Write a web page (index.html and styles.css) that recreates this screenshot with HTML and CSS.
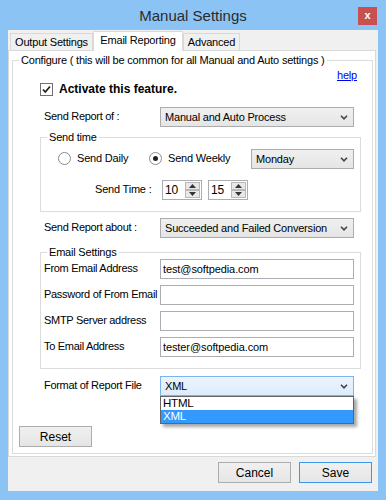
FILE: index.html
```html
<!DOCTYPE html>
<html lang="en">

<head>
    <meta charset="UTF-8">
    <meta name="viewport" content="width=device-width, initial-scale=1.0">
    <title>Manual Settings</title>
    <link rel="stylesheet" href="styles.css">
</head>

<body>
    <div class="window">
        <div class="titlebar">
            <span></span>
            <div class="title">Manual Settings</div>
            <div class="close">x</div>
        </div>
        <div class="client">
            <div class="tabs">
                <div class="tab tab-output">Output Settings</div>
                <div class="tab tab-active tab-email">Email Reporting</div>
                <div class="tab tab-advanced">Advanced</div>
            </div>
            <div class="panel">
                <fieldset class="group group-config">
                    <legend>Configure ( this will be common for all Manual and Auto settings )</legend>
                    <div class="help-row"><a href="#">help</a></div>
                    <label class="activate-row">
                        <span class="checkbox">
                            <svg width="11" height="11" viewBox="0 0 11 11">
                                <path d="M2 5.5 L4.3 8 L9 2.5" fill="none" stroke="#222" stroke-width="1.8" />
                            </svg>
                        </span>
                        <b>Activate this feature.</b>
                    </label>

                    <div class="row row-report-of">
                        <span class="label">Send Report of :</span>
                        <div class="combo">
                            <span>Manual and Auto Process</span>
                            <svg class="arrow" width="8" height="5" viewBox="0 0 8 5"><path d="M1 0.8 L4 3.8 L7 0.8" fill="none" stroke="#444" stroke-width="1.6" /></svg>
                        </div>
                    </div>

                    <fieldset class="group group-time">
                        <legend>Send time</legend>
                        <div class="radio-row">
                            <label class="radio-opt opt-daily"><span class="radio"></span>Send Daily</label>
                            <label class="radio-opt opt-weekly"><span class="radio radio-on"></span>Send Weekly</label>
                            <div class="combo combo-day">
                                <span>Monday</span>
                                <svg class="arrow" width="8" height="5" viewBox="0 0 8 5"><path d="M1 0.8 L4 3.8 L7 0.8" fill="none" stroke="#444" stroke-width="1.6" /></svg>
                            </div>
                        </div>
                        <div class="spin-row">
                            <span class="spin-label">Send Time :</span>
                            <div class="spinner">
                                <span class="spin-value">10</span>
                                <span class="spin-buttons">
                                    <span class="spin-btn"><svg width="7" height="4" viewBox="0 0 7 4"><path d="M0 4 L3.5 0 L7 4 Z" fill="#333" /></svg></span>
                                    <span class="spin-btn"><svg width="7" height="4" viewBox="0 0 7 4"><path d="M0 0 L3.5 4 L7 0 Z" fill="#333" /></svg></span>
                                </span>
                            </div>
                            <div class="spinner">
                                <span class="spin-value">15</span>
                                <span class="spin-buttons">
                                    <span class="spin-btn"><svg width="7" height="4" viewBox="0 0 7 4"><path d="M0 4 L3.5 0 L7 4 Z" fill="#333" /></svg></span>
                                    <span class="spin-btn"><svg width="7" height="4" viewBox="0 0 7 4"><path d="M0 0 L3.5 4 L7 0 Z" fill="#333" /></svg></span>
                                </span>
                            </div>
                        </div>
                    </fieldset>

                    <div class="row row-about">
                        <span class="label">Send Report about :</span>
                        <div class="combo">
                            <span>Succeeded and Failed Conversion</span>
                            <svg class="arrow" width="8" height="5" viewBox="0 0 8 5"><path d="M1 0.8 L4 3.8 L7 0.8" fill="none" stroke="#444" stroke-width="1.6" /></svg>
                        </div>
                    </div>

                    <fieldset class="group group-email">
                        <legend>Email Settings</legend>
                        <div class="row">
                            <span class="label">From Email Address</span>
                            <input type="text" class="textbox" value="test@softpedia.com">
                        </div>
                        <div class="row">
                            <span class="label">Password of From Email</span>
                            <input type="text" class="textbox" value="">
                        </div>
                        <div class="row">
                            <span class="label">SMTP Server address</span>
                            <input type="text" class="textbox" value="">
                        </div>
                        <div class="row">
                            <span class="label">To Email Address</span>
                            <input type="text" class="textbox" value="tester@softpedia.com">
                        </div>
                    </fieldset>

                    <div class="row row-format">
                        <span class="label">Format of Report File</span>
                        <div class="combo combo-open">
                            <span>XML</span>
                            <svg class="arrow" width="8" height="5" viewBox="0 0 8 5"><path d="M1 0.8 L4 3.8 L7 0.8" fill="none" stroke="#444" stroke-width="1.6" /></svg>
                            <div class="dropdown">
                                <div class="option">HTML</div>
                                <div class="option option-selected">XML</div>
                            </div>
                        </div>
                    </div>

                    <button class="btn btn-reset">Reset</button>
                </fieldset>
            </div>
            <div class="footer">
                <button class="btn">Cancel</button>
                <button class="btn btn-default">Save</button>
            </div>
        </div>
    </div>
</body>

</html>
```

FILE: styles.css
```css
* {
    margin: 0;
    padding: 0;
    box-sizing: border-box;
}

body {
    font-family: "Liberation Sans", Arial, sans-serif;
    font-size: 11px;
    letter-spacing: -0.2px;
    color: #000;
    background: #8bc3f5;
}

.window {
    width: 386px;
    height: 500px;
    background: #8bc3f5;
}

.titlebar {
    height: 30px;
    display: grid;
    grid-template-columns: 1fr auto 1fr;
}

.title {
    font-size: 15px;
    letter-spacing: 0;
    line-height: 31px;
    color: #2b2b2b;
}

.close {
    justify-self: end;
    width: 19px;
    height: 18px;
    margin: 7px 9px 0 0;
    background: #c75050;
    color: #fff;
    font-weight: bold;
    font-size: 11px;
    line-height: 16px;
    text-align: center;
}

.client {
    margin: 0 8px;
    height: 461px;
    background: #f0f0f0;
}

/* tabs */
.tabs {
    height: 20px;
    padding-left: 2px;
    display: flex;
    align-items: flex-end;
}

.tab {
    height: 17px;
    border: 1px solid #d9d9d9;
    border-bottom: none;
    background: #f0f0f0;
    text-align: center;
    line-height: 16px;
}

.tab-output {
    width: 83px;
}

.tab-email {
    width: 90px;
}

.tab-advanced {
    width: 57px;
}

.tab-active {
    position: relative;
    z-index: 1;
    height: 20px;
    margin-bottom: -1px;
    background: #fff;
    line-height: 17px;
}

.panel {
    height: 407px;
    margin-right: 2px;
    border: 1px solid #d9d9d9;
    background: #fff;
    padding: 2px 3px 3px 3px;
}

/* group boxes */
.group {
    border: 1px solid #dcdcdc;
    min-width: 0;
}

.group legend {
    margin-left: 6px;
    padding: 0 2px;
    line-height: 14px;
}

.group-config {
    width: 361px;
    padding-bottom: 6px;
}

.help-row {
    height: 14px;
    margin-top: 1px;
    padding-right: 15px;
    text-align: right;
    line-height: 14px;
}

.help-row a {
    color: #0000ee;
}

.activate-row {
    height: 14px;
    padding-left: 27px;
    display: flex;
    align-items: center;
    gap: 6px;
    font-size: 12px;
    letter-spacing: 0;
}

.checkbox {
    width: 13px;
    height: 13px;
    border: 1px solid #707070;
    background: #fff;
    display: flex;
    align-items: center;
    justify-content: center;
}

.row {
    height: 20px;
    display: flex;
    align-items: center;
}

.row .label {
    width: 116px;
    flex-shrink: 0;
    white-space: nowrap;
    letter-spacing: -0.3px;
    padding-bottom: 2px;
}

.group-config > .row {
    padding-left: 31px;
}

.row-report-of {
    margin-top: 11px;
}

.row-about {
    margin-top: 6px;
}

.row-format {
    margin-top: 7px;
}

/* combo boxes */
.combo {
    position: relative;
    width: 194px;
    height: 20px;
    border: 1px solid #acacac;
    background: linear-gradient(#f0f0f0, #e5e5e5);
    display: flex;
    align-items: center;
    justify-content: space-between;
    padding: 0 5px 0 4px;
}

.combo-day {
    width: 103px;
}

.combo-open {
    border-color: #7eb4ea;
    background: linear-gradient(#ecf4fc, #dcecfc);
}

.dropdown {
    position: absolute;
    top: 19px;
    left: -1px;
    width: 194px;
    border: 1px solid #646464;
    background: #fff;
    box-shadow: 3px 3px 3px rgba(0, 0, 0, 0.35);
}

.option {
    height: 13px;
    line-height: 13px;
    padding-left: 2px;
    font-size: 11.5px;
}

.option-selected {
    background: #3399ff;
    color: #fff;
}

/* send time */
.group-time {
    width: 321px;
    margin: 3px 0 0 27px;
    padding-bottom: 11px;
}

.radio-row {
    height: 20px;
    margin-top: 5px;
    padding-left: 17px;
    display: flex;
    align-items: center;
}

.radio-opt {
    display: flex;
    align-items: center;
    gap: 6px;
    padding-bottom: 2px;
}

.opt-daily {
    width: 91px;
}

.opt-weekly {
    width: 102px;
}

.radio {
    width: 13px;
    height: 13px;
    border: 1px solid #8b8b8b;
    border-radius: 50%;
    background: #fff;
    display: flex;
    align-items: center;
    justify-content: center;
}

.radio-on::after {
    content: "";
    width: 5px;
    height: 5px;
    border-radius: 50%;
    background: #222;
}

.spin-row {
    height: 20px;
    margin-top: 11px;
    padding-left: 54px;
    display: flex;
    align-items: center;
    gap: 6px;
}

.spin-label {
    width: 61px;
    padding-bottom: 2px;
}

.spinner {
    width: 40px;
    height: 20px;
    border: 1px solid #abadb3;
    background: #fff;
    display: flex;
    justify-content: space-between;
    padding: 1px;
    font-size: 12px;
}

.spin-value {
    padding-left: 1px;
    line-height: 16px;
}

.spin-buttons {
    width: 15px;
    display: flex;
    flex-direction: column;
}

.spin-btn {
    flex: 1;
    border: 1px solid #b8b8b8;
    background: #e8e8e8;
    display: flex;
    align-items: center;
    justify-content: center;
}

/* email settings */
.group-email {
    width: 321px;
    margin: 7px 0 0 27px;
    padding-bottom: 11px;
}

.group-email .row {
    padding-left: 3px;
}

.group-email .row + .row {
    margin-top: 6px;
}

.textbox {
    width: 194px;
    height: 20px;
    border: 1px solid #abadb3;
    padding: 0 2px;
    font-family: "Liberation Sans", Arial, sans-serif;
    font-size: 11px;
    letter-spacing: -0.1px;
    color: #000;
    outline: none;
}

/* buttons */
.btn {
    width: 73px;
    height: 21px;
    border: 1px solid #acacac;
    background: linear-gradient(#f0f0f0, #e5e5e5);
    font-family: "Liberation Sans", Arial, sans-serif;
    font-size: 12px;
    color: #000;
}

.btn-reset {
    display: block;
    margin: 30px 0 0 6px;
}

.btn-default {
    border-color: #3d95e8;
}

.footer {
    display: flex;
    justify-content: flex-end;
    gap: 8px;
    padding: 5px 6px 0 0;
}
```
